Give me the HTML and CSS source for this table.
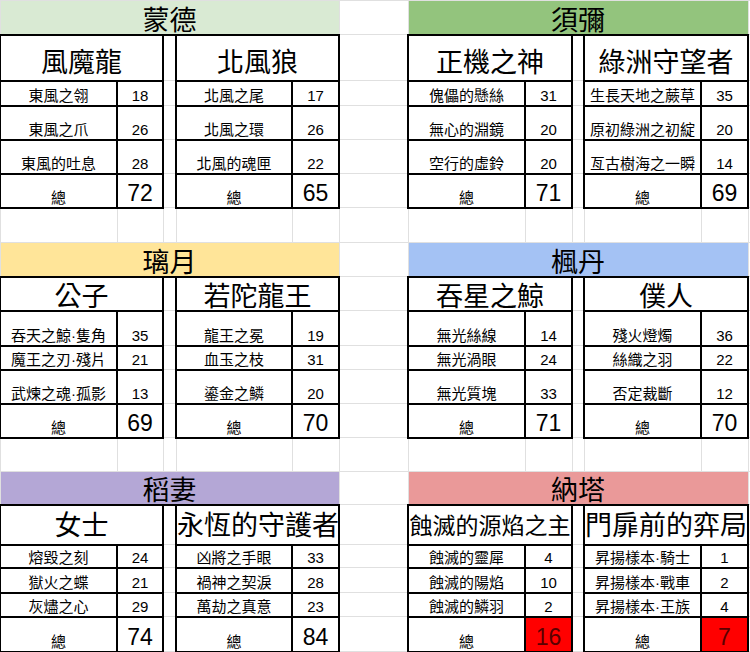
FILE: index.html
```html
<!DOCTYPE html>
<html lang="zh-Hant">
<head>
<meta charset="utf-8">
<title>BOSS 材料表</title>
<link rel="stylesheet" href="styles.css">
</head>
<body>
<table class="sheet">
  <colgroup>
    <col class="c117"><col class="c46"><col class="c13"><col class="c116"><col class="c47">
    <col class="c69">
    <col class="c117"><col class="c47"><col class="c12"><col class="c117"><col class="c47">
    <col class="c3">
  </colgroup>
  <tbody>
    <!-- Section 1 -->
    <tr class="h34">
      <td colspan="5" class="hd mond">蒙德</td><td></td>
      <td colspan="5" class="hd sume">須彌</td><td></td>
    </tr>
    <tr class="h46">
      <td colspan="2" class="t nm lift4">風魔龍</td><td></td>
      <td colspan="2" class="t nm lift4">北風狼</td><td></td>
      <td colspan="2" class="t nm lift4">正機之神</td><td></td>
      <td colspan="2" class="t nm lift4">綠洲守望者</td><td></td>
    </tr>
    <tr class="h25">
      <td class="t">東風之翎</td><td class="t">18</td><td></td>
      <td class="t">北風之尾</td><td class="t">17</td><td></td>
      <td class="t">傀儡的懸絲</td><td class="t">31</td><td></td>
      <td class="t">生長天地之蕨草</td><td class="t">35</td><td></td>
    </tr>
    <tr class="h34">
      <td class="t">東風之爪</td><td class="t">26</td><td></td>
      <td class="t">北風之環</td><td class="t">26</td><td></td>
      <td class="t">無心的淵鏡</td><td class="t">20</td><td></td>
      <td class="t">原初綠洲之初綻</td><td class="t">20</td><td></td>
    </tr>
    <tr class="h34">
      <td class="t">東風的吐息</td><td class="t">28</td><td></td>
      <td class="t">北風的魂匣</td><td class="t">22</td><td></td>
      <td class="t">空行的虛鈴</td><td class="t">20</td><td></td>
      <td class="t">亙古樹海之一瞬</td><td class="t">14</td><td></td>
    </tr>
    <tr class="h34">
      <td class="t">總</td><td class="t tn">72</td><td></td>
      <td class="t">總</td><td class="t tn">65</td><td></td>
      <td class="t">總</td><td class="t tn">71</td><td></td>
      <td class="t">總</td><td class="t tn">69</td><td></td>
    </tr>
    <tr class="h35">
      <td></td><td></td><td></td><td></td><td></td><td></td><td></td><td></td><td></td><td></td><td></td><td></td>
    </tr>

    <!-- Section 2 -->
    <tr class="h34">
      <td colspan="5" class="hd liyue">璃月</td><td></td>
      <td colspan="5" class="hd font">楓丹</td><td></td>
    </tr>
    <tr class="h34">
      <td colspan="2" class="t nm">公子</td><td></td>
      <td colspan="2" class="t nm">若陀龍王</td><td></td>
      <td colspan="2" class="t nm">吞星之鯨</td><td></td>
      <td colspan="2" class="t nm">僕人</td><td></td>
    </tr>
    <tr class="h35">
      <td class="t">吞天之鯨·隻角</td><td class="t">35</td><td></td>
      <td class="t">龍王之冕</td><td class="t">19</td><td></td>
      <td class="t">無光絲線</td><td class="t">14</td><td></td>
      <td class="t">殘火燈燭</td><td class="t">36</td><td></td>
    </tr>
    <tr class="h24">
      <td class="t">魔王之刃·殘片</td><td class="t">21</td><td></td>
      <td class="t">血玉之枝</td><td class="t">31</td><td></td>
      <td class="t">無光渦眼</td><td class="t">24</td><td></td>
      <td class="t">絲織之羽</td><td class="t">22</td><td></td>
    </tr>
    <tr class="h34">
      <td class="t">武煉之魂·孤影</td><td class="t">13</td><td></td>
      <td class="t">鎏金之鱗</td><td class="t">20</td><td></td>
      <td class="t">無光質塊</td><td class="t">33</td><td></td>
      <td class="t">否定裁斷</td><td class="t">12</td><td></td>
    </tr>
    <tr class="h34">
      <td class="t">總</td><td class="t tn">69</td><td></td>
      <td class="t">總</td><td class="t tn">70</td><td></td>
      <td class="t">總</td><td class="t tn">71</td><td></td>
      <td class="t">總</td><td class="t tn">70</td><td></td>
    </tr>
    <tr class="h34">
      <td></td><td></td><td></td><td></td><td></td><td></td><td></td><td></td><td></td><td></td><td></td><td></td>
    </tr>

    <!-- Section 3 -->
    <tr class="h33">
      <td colspan="5" class="hd ina">稻妻</td><td></td>
      <td colspan="5" class="hd natlan">納塔</td><td></td>
    </tr>
    <tr class="h40">
      <td colspan="2" class="t nm lift5">女士</td><td></td>
      <td colspan="2" class="t nm lift5">永恆的守護者</td><td></td>
      <td colspan="2" class="t nm nm-sm lift5">蝕滅的源焰之主</td><td></td>
      <td colspan="2" class="t nm lift5">門扉前的弈局</td><td></td>
    </tr>
    <tr class="h23">
      <td class="t">熔毀之刻</td><td class="t">24</td><td></td>
      <td class="t">凶將之手眼</td><td class="t">33</td><td></td>
      <td class="t">蝕滅的靈犀</td><td class="t">4</td><td></td>
      <td class="t">昇揚樣本·騎士</td><td class="t">1</td><td></td>
    </tr>
    <tr class="h25">
      <td class="t">獄火之蝶</td><td class="t">21</td><td></td>
      <td class="t">禍神之契淚</td><td class="t">28</td><td></td>
      <td class="t">蝕滅的陽焰</td><td class="t">10</td><td></td>
      <td class="t">昇揚樣本·戰車</td><td class="t">2</td><td></td>
    </tr>
    <tr class="h24">
      <td class="t">灰燼之心</td><td class="t">29</td><td></td>
      <td class="t">萬劫之真意</td><td class="t">23</td><td></td>
      <td class="t">蝕滅的鱗羽</td><td class="t">2</td><td></td>
      <td class="t">昇揚樣本·王族</td><td class="t">4</td><td></td>
    </tr>
    <tr class="h35">
      <td class="t">總</td><td class="t tn">74</td><td></td>
      <td class="t">總</td><td class="t tn">84</td><td></td>
      <td class="t">總</td><td class="t tn red">16</td><td></td>
      <td class="t">總</td><td class="t tn red">7</td><td></td>
    </tr>
    <tr class="h24">
      <td></td><td></td><td></td><td></td><td></td><td></td><td></td><td></td><td></td><td></td><td></td><td></td>
    </tr>
  </tbody>
</table>
</body>
</html>
```

FILE: styles.css
```css
html, body {
  margin: 0;
  padding: 0;
  background: #ffffff;
  overflow: hidden;
}

.sheet {
  border-collapse: collapse;
  table-layout: fixed;
  width: 751px;
  margin-left: -1px;
  font-family: "Liberation Sans", "Noto Sans CJK TC", sans-serif;
  color: #000000;
}

.c117 { width: 117px; }
.c116 { width: 116px; }
.c69  { width: 69px; }
.c47  { width: 47px; }
.c46  { width: 46px; }
.c13  { width: 13px; }
.c12  { width: 12px; }
.c3   { width: 3px; }

.h23 { height: 23px; }
.h24 { height: 24px; }
.h25 { height: 25px; }
.h33 { height: 33px; }
.h34 { height: 34px; }
.h35 { height: 35px; }
.h40 { height: 40px; }
.h46 { height: 46px; }

.sheet td {
  border: 1px solid #e0e0e0;
  padding: 0 0 1px 0;
  text-align: center;
  vertical-align: bottom;
  white-space: nowrap;
  overflow: hidden;
  font-size: 15px;
  line-height: 17px;
}

.sheet td.t {
  border: 2px solid #000000;
}

.sheet td.hd {
  border-bottom: 2px solid #000000;
  font-size: 27px;
  line-height: 26px;
  padding: 0;
}

.mond   { background: #d9ead3; }
.sume   { background: #93c47d; }
.liyue  { background: #ffe599; }
.font   { background: #a4c2f4; }
.ina    { background: #b4a7d6; }
.natlan { background: #ea9999; }

.sheet td.nm {
  font-size: 27px;
  line-height: 26px;
  padding: 0;
  overflow: visible;
}

.sheet td.nm-sm {
  font-size: 23px;
}

.sheet td.lift4 { padding-bottom: 4px; }
.sheet td.lift5 { padding-bottom: 5px; }

.sheet td.tn {
  font-size: 23px;
  line-height: 26px;
}

.sheet td.red {
  background: #ff0000;
  color: #5a0000;
}
```
